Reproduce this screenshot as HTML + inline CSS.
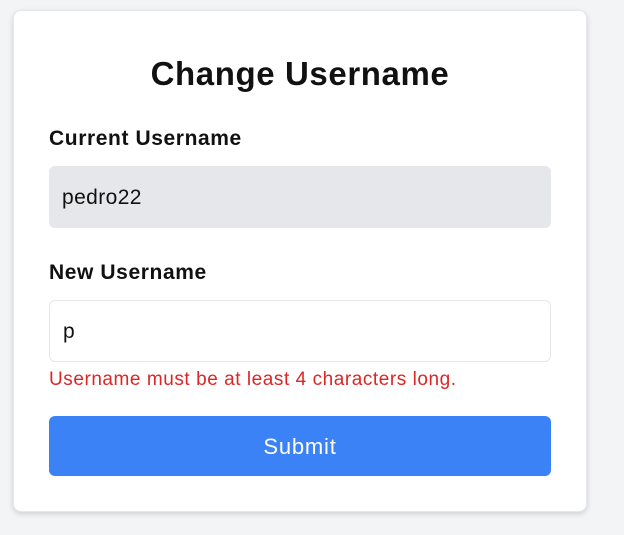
<!DOCTYPE html>
<html><head><style>
body{margin:0;background:#f3f4f6;font-family:"Liberation Sans",sans-serif;width:624px;height:535px;overflow:hidden;position:relative}
.card{position:absolute;left:13px;top:10px;width:574px;height:502px;background:#fff;border-radius:8px;box-shadow:0 2px 6px rgba(0,0,0,.15);border:1px solid #e5e7eb;box-sizing:border-box}
.a{position:absolute}
h1{position:absolute;left:0;right:0;margin:0;text-align:center;font-size:33px;font-weight:bold;color:#111;line-height:40px;letter-spacing:0.6px}
.lbl{font-size:21px;font-weight:bold;color:#111;left:35px;line-height:24px;letter-spacing:0.6px}
.inp{left:35px;width:502px;height:62px;border-radius:6px;box-sizing:border-box;font-size:21px;color:#111;padding-left:13px;line-height:62px;letter-spacing:0.4px}
</style></head><body>
<div class="card">
<h1 style="top:43px">Change Username</h1>
<div class="a lbl" style="top:116px">Current Username</div>
<div class="a inp" style="top:155px;background:#e5e7eb;line-height:64px">pedro22</div>
<div class="a lbl" style="top:250px">New Username</div>
<div class="a inp" style="top:289px;border:1px solid #e5e7eb">p</div>
<div class="a" style="left:35px;top:358px;font-size:19px;color:#dc2626;line-height:22px;letter-spacing:0.55px">Username must be at least 4 characters long.</div>
<div class="a" style="left:35px;top:405px;width:502px;height:60px;background:#3b82f6;border-radius:6px;color:#fff;font-size:22px;text-align:center;line-height:62px;letter-spacing:0.8px">Submit</div>
</div>
</body></html>
